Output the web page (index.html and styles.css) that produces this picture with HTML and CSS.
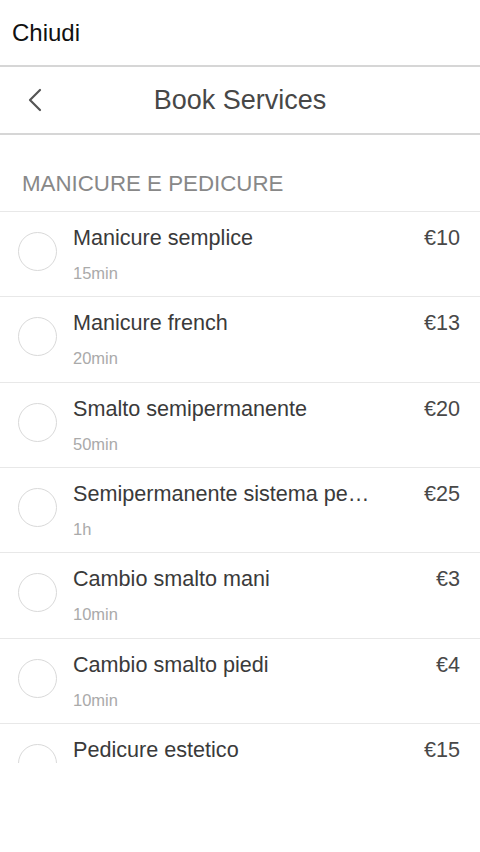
FILE: index.html
```html
<!DOCTYPE html>
<html>
<head lang="it">
    <meta charset="UTF-8">
    <title>Book Services</title>
    <link rel="stylesheet" href="styles.css">
</head>
<body>
    <div id="topbar">Chiudi</div>

    <div id="navbar">
        <div class="back">
            <svg width="16" height="24" viewBox="0 0 16 24">
                <polyline points="13,2 3,12 13,22" fill="none" stroke="#555" stroke-width="2.2" stroke-linecap="round" stroke-linejoin="round"/>
            </svg>
        </div>
        <div class="title">Book Services</div>
        <div></div>
    </div>

    <div id="scroll">
        <div class="section">MANICURE E PEDICURE</div>
        <ul class="list">
            <li class="row">
                <div class="check"></div>
                <div class="body">
                    <div class="line"><span class="name">Manicure semplice</span><span class="price">€10</span></div>
                    <div class="time">15min</div>
                </div>
            </li>
            <li class="row">
                <div class="check"></div>
                <div class="body">
                    <div class="line"><span class="name">Manicure french</span><span class="price">€13</span></div>
                    <div class="time">20min</div>
                </div>
            </li>
            <li class="row">
                <div class="check"></div>
                <div class="body">
                    <div class="line"><span class="name">Smalto semipermanente</span><span class="price">€20</span></div>
                    <div class="time">50min</div>
                </div>
            </li>
            <li class="row">
                <div class="check"></div>
                <div class="body">
                    <div class="line"><span class="name">Semipermanente sistema pedicure</span><span class="price">€25</span></div>
                    <div class="time">1h</div>
                </div>
            </li>
            <li class="row">
                <div class="check"></div>
                <div class="body">
                    <div class="line"><span class="name">Cambio smalto mani</span><span class="price">€3</span></div>
                    <div class="time">10min</div>
                </div>
            </li>
            <li class="row">
                <div class="check"></div>
                <div class="body">
                    <div class="line"><span class="name">Cambio smalto piedi</span><span class="price">€4</span></div>
                    <div class="time">10min</div>
                </div>
            </li>
            <li class="row">
                <div class="check"></div>
                <div class="body">
                    <div class="line"><span class="name">Pedicure estetico</span><span class="price">€15</span></div>
                </div>
            </li>
        </ul>
    </div>
</body>
</html>
```

FILE: styles.css
```css
*{
    margin: 0;
    padding: 0;
    box-sizing: border-box;
}
li{
    list-style: none;
}
body{
    width: 480px;
    height: 852px;
    background: #fff;
    font-family: "Liberation Sans", Arial, sans-serif;
    overflow: hidden;
}
#topbar{
    height: 67px;
    line-height: 65px;
    padding-left: 12px;
    font-size: 24px;
    color: #111;
    border-bottom: 2px solid #d6d6d6;
}
#navbar{
    height: 68px;
    display: grid;
    grid-template-columns: 70px 1fr 70px;
    align-items: center;
    border-bottom: 2px solid #d6d6d6;
}
#navbar .back{
    padding-left: 27px;
    display: flex;
    align-items: center;
}
#navbar .title{
    text-align: center;
    font-size: 27px;
    color: #474747;
    line-height: 66px;
}
/*可滚动区域，底部被截断*/
#scroll{
    height: 628px;
    overflow: hidden;
}
.section{
    padding: 36px 0 14px 22px;
    font-size: 22.3px;
    line-height: 26px;
    color: #888;
    border-bottom: 1px solid #e8e8e8;
}
.row{
    height: 85.33px;
    display: flex;
    align-items: flex-start;
    border-bottom: 1px solid #e8e8e8;
}
.check{
    width: 39px;
    height: 39px;
    margin: 20px 0 0 18px;
    border: 1.5px solid #d9d9d9;
    border-radius: 50%;
    flex-shrink: 0;
}
.body{
    flex: 1;
    min-width: 0;
    padding: 13px 20px 0 16px;
}
.line{
    display: flex;
    line-height: 26px;
    font-size: 21.6px;
}
.name{
    flex: 1;
    min-width: 0;
    color: #3a3a3a;
    white-space: nowrap;
    overflow: hidden;
    text-overflow: ellipsis;
    padding-right: 48px;
}
.price{
    color: #484848;
    font-size: 21.6px;
}
.time{
    margin-top: 11px;
    font-size: 16.5px;
    line-height: 22px;
    color: #aaa;
}
```
